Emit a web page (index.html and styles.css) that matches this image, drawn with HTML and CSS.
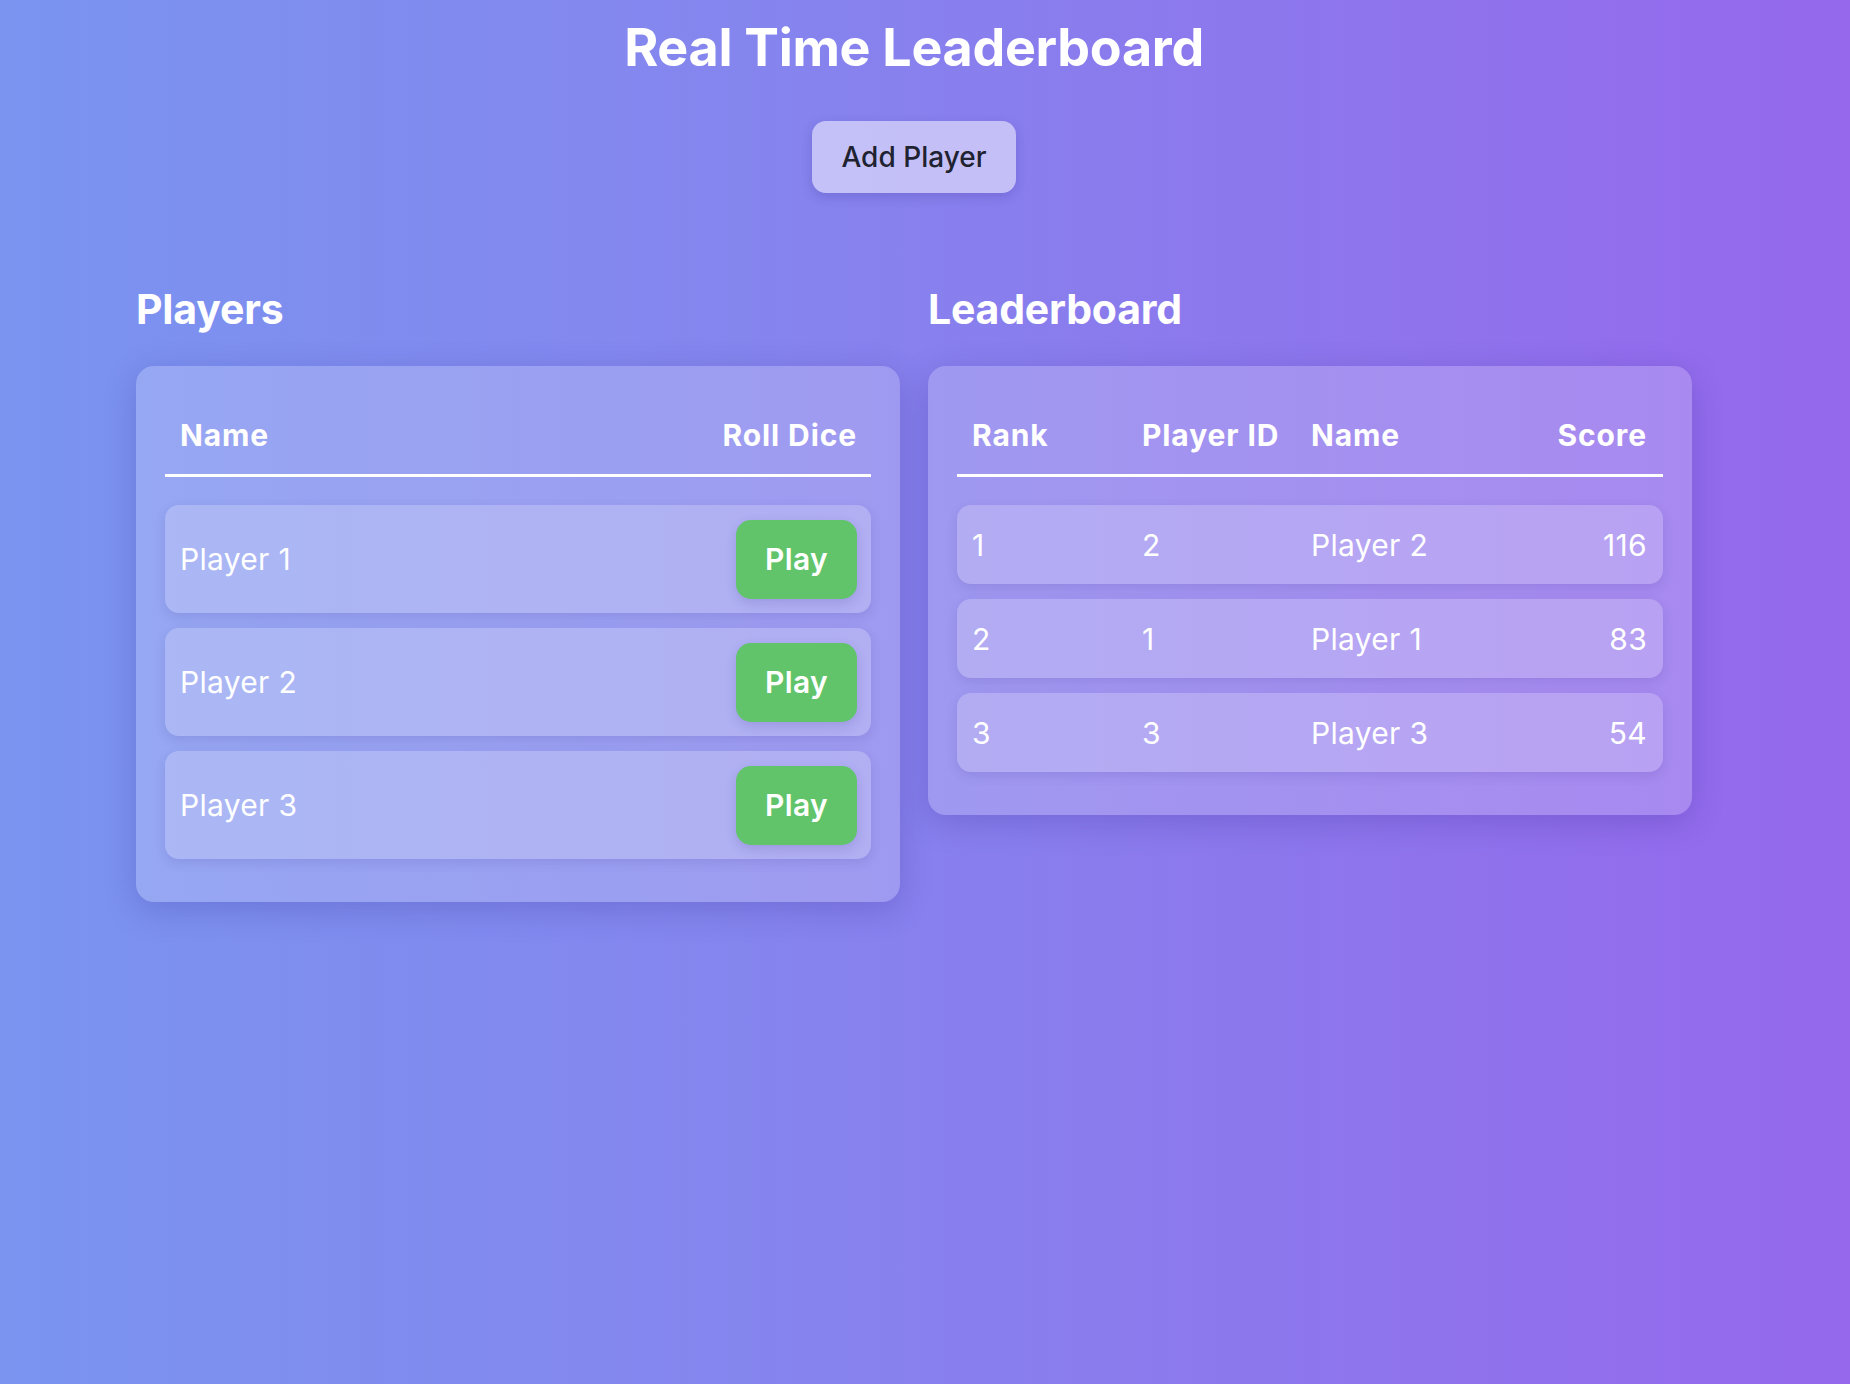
FILE: index.html
```html
<!DOCTYPE html>
<html lang="en">
<head>
<meta charset="utf-8">
<title>Real Time Leaderboard</title>
<link rel="stylesheet" href="styles.css">
</head>
<body>
<div class="app">
  <h1 class="title">Real Time Leaderboard</h1>
  <div class="actions">
    <button class="add-btn">Add Player</button>
  </div>
  <div class="columns">
    <section class="panel">
      <h2 class="panel-title">Players</h2>
      <div class="card">
        <div class="grid players-grid head">
          <div class="cell">Name</div>
          <div class="cell right">Roll Dice</div>
        </div>
        <div class="rows">
          <div class="grid players-grid row tall">
            <div class="cell">Player 1</div>
            <div class="cell right"><button class="play-btn">Play</button></div>
          </div>
          <div class="grid players-grid row tall">
            <div class="cell">Player 2</div>
            <div class="cell right"><button class="play-btn">Play</button></div>
          </div>
          <div class="grid players-grid row tall">
            <div class="cell">Player 3</div>
            <div class="cell right"><button class="play-btn">Play</button></div>
          </div>
        </div>
      </div>
    </section>
    <section class="panel">
      <h2 class="panel-title">Leaderboard</h2>
      <div class="card">
        <div class="grid board-grid head">
          <div class="cell">Rank</div>
          <div class="cell">Player ID</div>
          <div class="cell">Name</div>
          <div class="cell right">Score</div>
        </div>
        <div class="rows">
          <div class="grid board-grid row">
            <div class="cell">1</div>
            <div class="cell">2</div>
            <div class="cell">Player 2</div>
            <div class="cell right">116</div>
          </div>
          <div class="grid board-grid row">
            <div class="cell">2</div>
            <div class="cell">1</div>
            <div class="cell">Player 1</div>
            <div class="cell right">83</div>
          </div>
          <div class="grid board-grid row">
            <div class="cell">3</div>
            <div class="cell">3</div>
            <div class="cell">Player 3</div>
            <div class="cell right">54</div>
          </div>
        </div>
      </div>
    </section>
  </div>
</div>
</body>
</html>
```
FILE: styles.css
```css
html, body {
  margin: 0;
  padding: 0;
  height: 100%;
}

body {
  font-family: Inter, "Noto Sans", "Liberation Sans", sans-serif;
  color: #ffffff;
  background: linear-gradient(to right, #7a94f0 0%, #8585ee 40%, #9568ec 100%);
  min-height: 1384px;
}

.app {
  margin-right: 22px;
  padding-top: 17px;
}

.title {
  margin: 0;
  text-align: center;
  font-size: 52px;
  line-height: 62px;
  font-weight: 700;
  letter-spacing: -0.3px;
}

.actions {
  display: flex;
  justify-content: center;
  margin-top: 42px;
}

.add-btn {
  font-family: inherit;
  font-size: 28px;
  font-weight: 500;
  color: #1f2230;
  background: rgba(255, 255, 255, 0.5);
  border: none;
  border-radius: 14px;
  height: 72px;
  width: 204px;
  padding: 0;
  box-shadow: 0 4px 12px rgba(40, 30, 120, 0.18);
}

.columns {
  max-width: 1556px;
  margin: 92px auto 0;
  display: grid;
  grid-template-columns: 1fr 1fr;
  column-gap: 28px;
  align-items: start;
}

.panel-title {
  margin: 0 0 32px;
  font-size: 41px;
  line-height: 49px;
  font-weight: 700;
  letter-spacing: -0.2px;
}

.card {
  background: rgba(255, 255, 255, 0.2);
  border-radius: 18px;
  padding: 51px 29px 43px;
  box-shadow: 0 8px 32px rgba(40, 30, 130, 0.22);
}

.grid {
  display: grid;
  align-items: center;
}

.players-grid {
  grid-template-columns: 1fr auto;
}

.players-grid .cell {
  padding: 0 14px 0 15px;
}

.board-grid {
  grid-template-columns: 170px 169px 1fr auto;
}

.board-grid .cell {
  padding: 0 16px 0 15px;
}

.cell {
  font-size: 30px;
  line-height: 36px;
  letter-spacing: 0.3px;
}

.right {
  text-align: right;
}

.head {
  padding-bottom: 21px;
  border-bottom: 3px solid #ffffff;
  margin-bottom: 28px;
}

.head .cell {
  font-weight: 700;
  letter-spacing: 0.9px;
}

.rows {
  display: flex;
  flex-direction: column;
  gap: 15px;
}

.row {
  height: 79px;
  background: rgba(255, 255, 255, 0.2);
  border-radius: 14px;
  box-shadow: 0 4px 12px rgba(40, 30, 120, 0.12);
}

.row.tall {
  height: 108px;
}

.row .cell {
  font-weight: 400;
}

.play-btn {
  font-family: inherit;
  font-size: 30px;
  font-weight: 600;
  letter-spacing: 0.3px;
  color: #ffffff;
  background: #61c46b;
  border: none;
  border-radius: 15px;
  width: 121px;
  height: 79px;
  padding: 0;
  box-shadow: 0 4px 12px rgba(40, 30, 120, 0.15);
  vertical-align: middle;
}
```
